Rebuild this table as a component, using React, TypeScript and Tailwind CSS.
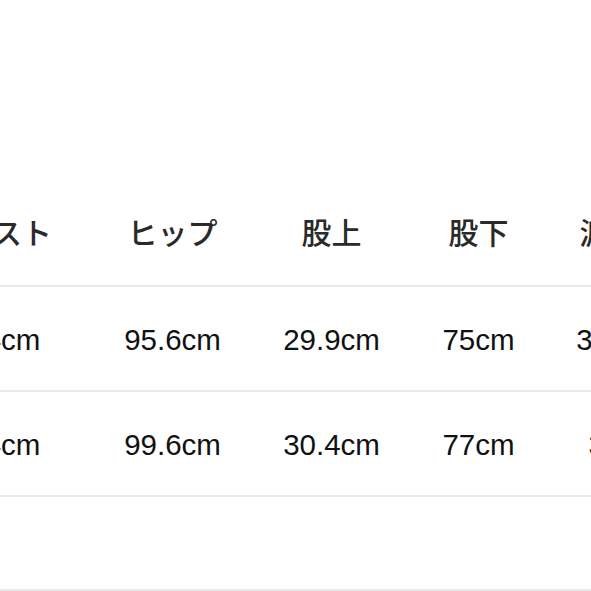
const HEADERS = ["ウエスト", "ヒップ", "股上", "股下", "渡り幅"];

const ROWS = [
  ["72.4cm", "95.6cm", "29.9cm", "75cm", "35.8cm"],
  ["76.4cm", "99.6cm", "30.4cm", "77cm", "37cm"],
];

const GRID = "grid grid-cols-[182px_179px_139px_155px_137px]";

export default function App() {
  return (
    <div className="w-[591px] h-[591px] overflow-hidden bg-white pt-[182px]">
      <div className="w-[792px] -ml-[99px]">
        <div
          className={`${GRID} h-[105px] pb-[6px] items-center border-b-2 border-[#e9e9e9]`}
        >
          {HEADERS.map((h) => (
            <div
              key={h}
              className="text-center whitespace-nowrap text-[30px] leading-none font-medium text-[#2a2a2a] [font-family:'Noto_Sans_CJK_JP','Noto_Sans_CJK_SC',sans-serif]"
            >
              {h}
            </div>
          ))}
        </div>

        {ROWS.map((row, i) => (
          <div
            key={i}
            className={`${GRID} h-[105px] pt-[4px] items-center border-b-2 border-[#e9e9e9]`}
          >
            {row.map((v, j) => (
              <div
                key={j}
                className="text-center whitespace-nowrap text-[29.5px] text-[#111111] [font-family:'Liberation_Sans',Arial,sans-serif]"
              >
                {v}
              </div>
            ))}
          </div>
        ))}

        <div className="h-[94px] border-b-2 border-[#e9e9e9]" />
      </div>
    </div>
  );
}
